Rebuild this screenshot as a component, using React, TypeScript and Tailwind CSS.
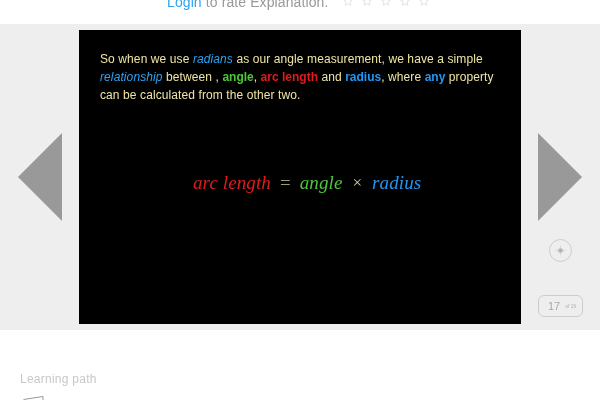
const sans = "font-['Liberation_Sans',Arial,sans-serif]";

function Star() {
  return (
    <svg width="10" height="10" viewBox="0 0 24 24" fill="none" stroke="#dddddd" strokeWidth="2">
      <path d="M12 2l3 7.200 7.500.6-5.700 4.900 1.800 7.500L12 18.200 5.400 22.200l1.800-7.500L1.500 9.800 9 9.200z" />
    </svg>
  );
}

function Arrow({ right }: { right?: boolean }) {
  return (
    <svg width="44" height="88" viewBox="0 0 44 88">
      <polygon points={right ? "0,0 44,44 0,88" : "44,0 0,44 44,88"} fill="#999999" />
    </svg>
  );
}

export default function App() {
  return (
    <div className={`${sans} w-[600px] h-[400px] bg-white overflow-hidden`}>
      <div className="h-6 flex overflow-hidden pl-[167px]">
        <div className="flex items-center h-[14px] -mt-[5px] text-[14px] tracking-[0.1px] text-[#999999] will-change-transform">
          <span className="text-[#2ea3f2]">Login</span>
          <span className="ml-1">to rate Explanation.</span>
          <div className="flex gap-[9px] ml-[15px] mt-[-3px]">
            <Star />
            <Star />
            <Star />
            <Star />
            <Star />
          </div>
        </div>
      </div>

      <div className="h-[306px] bg-[#eeeeee] flex py-[6px]">
        <div className="w-[79px] flex justify-start pl-[18px] pt-[103px]">
          <Arrow />
        </div>

        <div className="w-[442px] bg-black flex flex-col">
          <p className="pt-5 pl-[21px] pr-[20px] text-[12px] leading-[18px] tracking-[0.1px] text-[#efe5a5] will-change-transform">
            So when we use <i className="text-[#2ea3f2]">radians</i> as our angle measurement, we have a simple{" "}
            <i className="text-[#2ea3f2]">relationship</i> between , <b className="tracking-normal text-[#4fc63a]">angle</b>,{" "}
            <b className="tracking-normal text-[#e01b1b]">arc length</b> and <b className="tracking-normal text-[#2196f3]">radius</b>, where{" "}
            <b className="tracking-normal text-[#2196f3]">any</b> property can be calculated from the other two.
          </p>
          <div className="mt-[67px] pl-[114px] flex items-center font-['Liberation_Serif',serif] text-[19px] leading-6 italic tracking-[0.1px] will-change-transform">
            <span className="text-[#e01b1b]">arc length</span>
            <span className="ml-[9px] not-italic text-[#9c9a78]">=</span>
            <span className="ml-[9px] text-[#4fc63a]">angle</span>
            <span className="ml-[10px] not-italic text-[#d8cfa0] text-[17px]">×</span>
            <span className="ml-[10px] text-[#2196f3]">radius</span>
          </div>
        </div>

        <div className="w-[79px] flex flex-col items-center pt-[103px]">
          <div className="h-[88px] -ml-[2px]">
            <Arrow right />
          </div>
          <div className="mt-[18px] w-[23px] h-[23px] rounded-full border border-[#cccccc] flex items-center justify-center">
            <svg width="13" height="13" viewBox="0 0 13 13">
              <path d="M6.500 0 L7.200 5.800 L13 6.500 L7.200 7.200 L6.500 13 L5.800 7.200 L0 6.500 L5.800 5.800 Z" fill="#d0d0d0" />
              <circle cx="6.500" cy="6.500" r="2.500" fill="#c4c4c4" />
              <circle cx="6.500" cy="6.500" r="1.200" fill="#aaaaaa" />
            </svg>
          </div>
          <div className="mt-[33px] w-[45px] h-[22px] rounded-[6px] border border-[#cccccc] flex items-center pl-[9px] gap-[5px] will-change-transform">
            <span className="text-[11px] leading-none text-[#aaaaaa]">17</span>
            <span className="text-[5px] leading-none text-[#b5b5b5]">of 26</span>
          </div>
        </div>
      </div>

      <div className="pl-5 pt-[42px]">
        <div className="text-[12px] leading-[14px] tracking-[0.25px] text-[#c8c8c8] will-change-transform">Learning path</div>
        <svg className="mt-[10px]" width="24" height="12" viewBox="0 0 24 12" fill="none" stroke="#999999">
          <path d="M3.500 3.500 L23 0.500 L23 12" />
        </svg>
      </div>
    </div>
  );
}
